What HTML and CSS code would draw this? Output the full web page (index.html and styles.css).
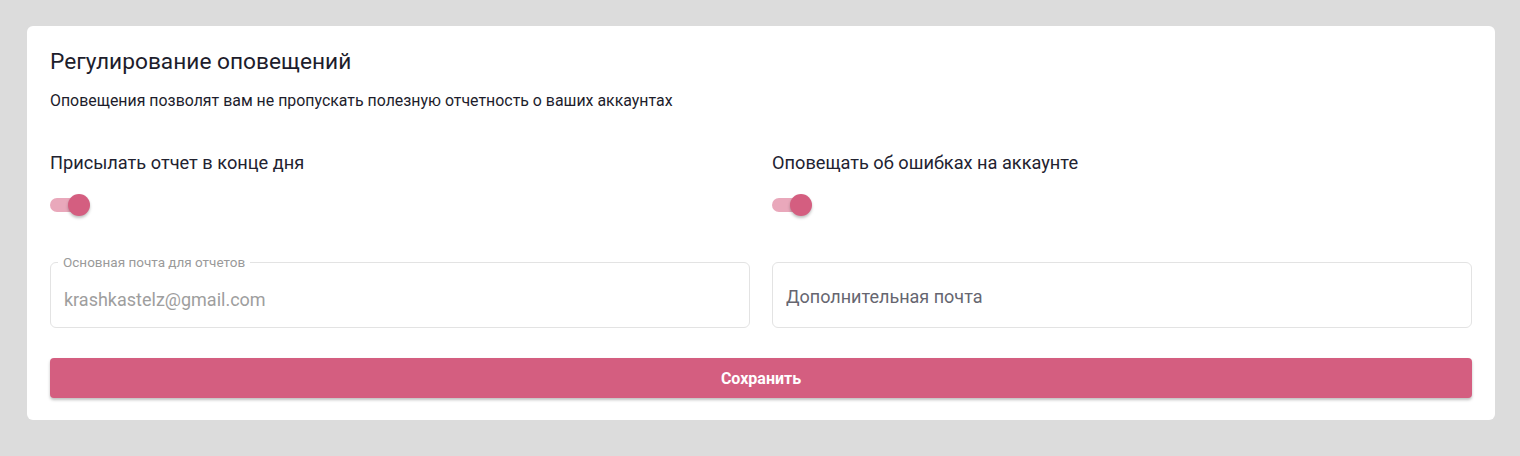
FILE: index.html
```html
<!DOCTYPE html>
<html lang="ru">
<head>
<meta charset="utf-8">
<title>Регулирование оповещений</title>
<link rel="stylesheet" href="styles.css">
</head>
<body>
<div class="page">
  <section class="card">
    <h1 class="title">Регулирование оповещений</h1>
    <p class="subtitle">Оповещения позволят вам не пропускать полезную отчетность о ваших аккаунтах</p>

    <div class="grid">
      <div class="setting">
        <div class="setting-label">Присылать отчет в конце дня</div>
        <div class="switch on"><span class="track"></span><span class="thumb"></span></div>
      </div>
      <div class="setting">
        <div class="setting-label">Оповещать об ошибках на аккаунте</div>
        <div class="switch on"><span class="track"></span><span class="thumb"></span></div>
      </div>
    </div>

    <div class="grid fields">
      <div class="field filled">
        <span class="field-label">Основная почта для отчетов</span>
        <input class="field-input" type="text" value="krashkastelz@gmail.com" disabled>
      </div>
      <div class="field">
        <input class="field-input" type="text" placeholder="Дополнительная почта">
      </div>
    </div>

    <button class="save" type="button">Сохранить</button>
  </section>
</div>
</body>
</html>
```

FILE: styles.css
```css
* { box-sizing: border-box; }

html, body {
  margin: 0;
  padding: 0;
  background: #dcdcdc;
  font-family: Roboto, "Noto Sans", "Liberation Sans", sans-serif;
}

.page {
  padding: 26px 25px 36px 27px;
}

.card {
  background: #ffffff;
  border-radius: 6px;
  padding: 20px 23px 22px 23px;
}

.title {
  margin: 0;
  font-size: 22.7px;
  line-height: 32px;
  font-weight: 400;
  color: #1d1d2c;
}

.subtitle {
  margin: 12px 0 0 0;
  font-size: 15.9px;
  line-height: 22px;
  color: #1d1d2c;
}

.grid {
  display: grid;
  grid-template-columns: 1fr 1fr;
  column-gap: 22px;
}

.setting {
  margin-top: 38px;
}

.setting-label {
  font-size: 18.2px;
  line-height: 26px;
  color: #222230;
}

.switch {
  position: relative;
  margin-top: 17px;
  width: 40px;
  height: 24px;
  display: flex;
  align-items: center;
}

.track {
  display: block;
  width: 36px;
  height: 14px;
  border-radius: 7px;
  background: #e9a8bb;
}

.thumb {
  position: absolute;
  left: 18px;
  top: 1px;
  width: 22px;
  height: 22px;
  border-radius: 50%;
  background: #d45e80;
  box-shadow: 0 2px 3px rgba(0,0,0,0.25);
}

.fields {
  margin-top: 45px;
}

.field {
  position: relative;
  height: 66px;
  border: 1px solid #e3e3e3;
  border-radius: 6px;
  display: flex;
  align-items: center;
  padding: 0 13px;
}

.field-label {
  position: absolute;
  top: -8px;
  left: 7px;
  padding: 0 5px;
  background: #ffffff;
  font-size: 13.5px;
  line-height: 14px;
  color: #9a9a9a;
}

.field-input {
  width: 100%;
  border: none;
  outline: none;
  background: transparent;
  padding: 0;
  font-family: inherit;
  font-size: 18px;
  color: #9e9e9e;
  margin-top: 2px;
}

.field.filled .field-input {
  margin-top: 9px;
}

.field-input::placeholder {
  color: #666670;
  opacity: 1;
}

.field-input:disabled {
  color: #9e9e9e;
}

.save {
  display: block;
  width: 100%;
  height: 40px;
  margin-top: 30px;
  border: none;
  border-radius: 4px;
  background: #d45e80;
  color: #ffffff;
  font-family: inherit;
  font-size: 16px;
  font-weight: 700;
  box-shadow: 0 2px 3px rgba(0,0,0,0.25);
  cursor: pointer;
}
```
